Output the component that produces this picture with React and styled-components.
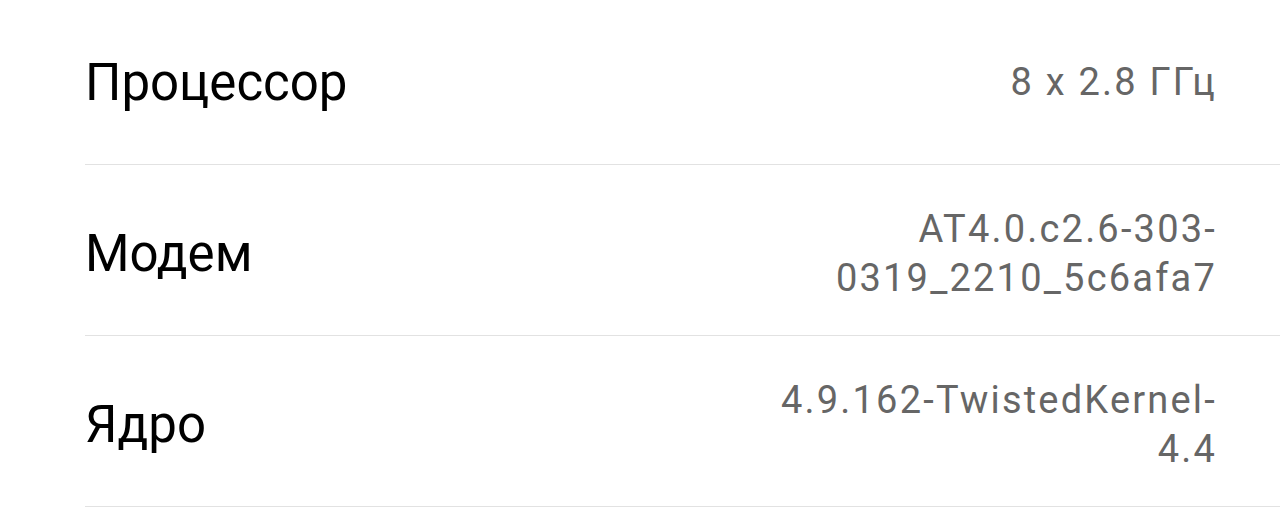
import styled, { createGlobalStyle } from "styled-components";

const GlobalStyle = createGlobalStyle`
  html, body {
    margin: 0;
    padding: 0;
    background: #ffffff;
    overflow: hidden;
  }
  body {
    font-family: Roboto, "Liberation Sans", sans-serif;
  }
`;

const List = styled.section`
  display: flex;
  flex-direction: column;
  margin-top: -6px;
  padding-left: 85px;
`;

const Row = styled.div`
  box-sizing: border-box;
  display: flex;
  align-items: center;
  justify-content: space-between;
  height: 171px;
  padding: 7px 63px 0 0;
  border-bottom: 1.5px solid #e2e2e2;
`;

const Label = styled.span`
  font-size: 51px;
  color: #000;
  line-height: 1.2;
`;

const Value = styled.span`
  max-width: 470px;
  font-size: 38px;
  line-height: 49px;
  letter-spacing: 2.2px;
  color: #666666;
  text-align: right;
`;

const items = [
  { label: "Процессор", value: "8 x 2.8 ГГц" },
  { label: "Модем", value: "AT4.0.c2.6-303-0319_2210_5c6afa7" },
  { label: "Ядро", value: "4.9.162-TwistedKernel-4.4" },
];

export default function App() {
  return (
    <>
      <GlobalStyle />
      <List>
        {items.map((item) => (
          <Row key={item.label}>
            <Label>{item.label}</Label>
            <Value>{item.value}</Value>
          </Row>
        ))}
      </List>
    </>
  );
}
